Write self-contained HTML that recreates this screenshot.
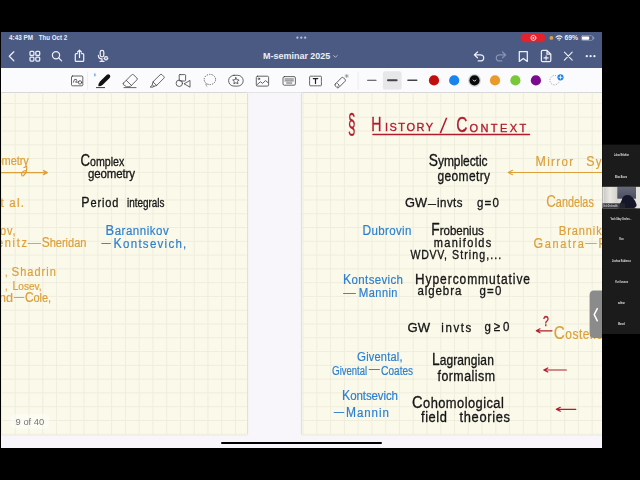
<!DOCTYPE html>
<html lang="en">
<head>
<meta charset="utf-8">
<title>M-seminar 2025</title>
<style>
*{box-sizing:border-box;margin:0;padding:0}
html,body{width:640px;height:480px;overflow:hidden;background:#000}
body{position:relative;font-family:"Liberation Sans",sans-serif;color:#000}
.abs{position:absolute}
#screen{position:absolute;left:1px;top:32px;width:601px;height:416px;background:#f8f6fa;overflow:hidden}
#nav{position:absolute;left:0;top:0;width:601px;height:36px;background:#4b5a82;color:#fff}
#tools{position:absolute;left:0;top:36px;width:601px;height:24.5px;background:#fbfbfd;border-bottom:1px solid #e4e3e6}
.page{position:absolute;top:60.5px;height:342.5px;background-color:#faf9ea;
 background-image:linear-gradient(to right,#efeddd 0,#efeddd 1px,transparent 1px),linear-gradient(to bottom,#efeddd 0,#efeddd 1px,transparent 1px);
 background-size:13.77px 13.79px;box-shadow:0 0.3px 1.6px rgba(0,0,0,.38);overflow:hidden}
#pl{left:-1px;width:246.5px;background-position:1px 10px}
#pr{left:300.5px;width:301px;background-position:0.6px 10px}
#home{position:absolute;left:220px;top:410.2px;width:160.5px;height:2.3px;border-radius:1.2px;background:#000}
#hw{filter:blur(0.3px)}
</style>
</head>
<body>
<div id="screen">
  <div id="nav"></div>
  <div id="tools"></div>
  <div class="page" id="pl"></div>
  <div class="page" id="pr"></div>
  <div id="home"></div>
</div>

<svg id="ui" class="abs" style="left:0;top:0" width="640" height="480" viewBox="0 0 640 480" fill="none" stroke-linecap="round" stroke-linejoin="round">
<!--HW-->
<g id="hw" font-family="'Liberation Sans',sans-serif" stroke-linecap="round" stroke-linejoin="round" fill="none">
 <path d="M0 172.6 H47 M43.5 170.6 L47.3 172.6 L43.5 174.6" stroke="#dca03a" stroke-width="1.2"/>
 <path d="M26.5 166 Q27.5 171 24.5 174.5 Q22 177.5 21.5 174.5 Q21.5 171.5 25.5 170.5" stroke="#dca03a" stroke-width="1.2"/>
 <path d="M373 134.6 H529.5" stroke="#b01c2b" stroke-width="1.5"/>
 <path d="M508.5 172.5 H602 M512.5 170.3 L508.3 172.5 L512.5 174.7" stroke="#dca03a" stroke-width="1.2"/>
 <path d="M536.5 330.8 H552 M540 328.8 L536.3 330.8 L540 332.8" stroke="#b01c2b" stroke-width="1.2"/>
 <path d="M544 370 H566.3 M547.8 368 L543.8 370 L547.8 372" stroke="#b01c2b" stroke-width="1.2"/>
 <path d="M556.5 409.3 H575.8 M560.3 407.3 L556.3 409.3 L560.3 411.3" stroke="#b01c2b" stroke-width="1.2"/>
 <text x="28" y="246.5" font-size="12.5" textLength="12.8" lengthAdjust="spacingAndGlyphs" fill="#dca03a" stroke="#dca03a" stroke-width="0.3">–</text>
 <text x="101.8" y="246.8" font-size="12.5" textLength="8.7" lengthAdjust="spacingAndGlyphs" fill="#2e80ce" stroke="#2e80ce" stroke-width="0.3">–</text>
 <text x="14" y="301.2" font-size="12.5" textLength="10" lengthAdjust="spacingAndGlyphs" fill="#dca03a" stroke="#dca03a" stroke-width="0.3">–</text>
 <text x="428" y="207.5" font-size="12.5" textLength="8" lengthAdjust="spacingAndGlyphs" fill="#151515" stroke="#151515" stroke-width="0.3">–</text>
 <text x="585.5" y="246.9" font-size="12.5" textLength="11.0" lengthAdjust="spacingAndGlyphs" fill="#dca03a" stroke="#dca03a" stroke-width="0.3">–</text>
 <text x="343.5" y="296.8" font-size="12.5" textLength="12.0" lengthAdjust="spacingAndGlyphs" fill="#2e80ce" stroke="#2e80ce" stroke-width="0.3">–</text>
 <text x="369" y="373.4" font-size="12.5" textLength="10.5" lengthAdjust="spacingAndGlyphs" fill="#2e80ce" stroke="#2e80ce" stroke-width="0.3">–</text>
 <text x="334" y="415.8" font-size="12.5" textLength="10" lengthAdjust="spacingAndGlyphs" fill="#2e80ce" stroke="#2e80ce" stroke-width="0.3">–</text>
 <text transform="matrix(1 0 0 1.15 0 -24.79)" x="-4.5" y="165.3" font-size="11.0" textLength="33.3" lengthAdjust="spacing" fill="#dca03a" stroke="#dca03a" stroke-width="0.18">ometry</text>
 <text transform="matrix(1 0 0 1.15 0 -24.94)" x="80.5" y="166.3" font-size="11.5" textLength="43.8" lengthAdjust="spacingAndGlyphs" fill="#151515" stroke="#151515" stroke-width="0.28"><tspan font-size="14.3">C</tspan>omplex</text>
 <text transform="matrix(1 0 0 1.15 0 -26.67)" x="88" y="177.8" font-size="11.5" textLength="47" lengthAdjust="spacing" fill="#151515" stroke="#151515" stroke-width="0.28">geometry</text>
 <text transform="matrix(1 0 0 1.15 0 -31.12)" x="0.5" y="207.5" font-size="11.5" textLength="23.5" lengthAdjust="spacing" fill="#dca03a" stroke="#dca03a" stroke-width="0.18">t al.</text>
 <text transform="matrix(1 0 0 1.15 0 -30.99)" x="81.3" y="206.6" font-size="11.0" textLength="37.2" lengthAdjust="spacing" fill="#151515" stroke="#151515" stroke-width="0.28"><tspan font-size="12.4">P</tspan>eriod</text>
 <text transform="matrix(1 0 0 1.15 0 -30.99)" x="127" y="206.6" font-size="11.0" textLength="37.5" lengthAdjust="spacingAndGlyphs" fill="#151515" stroke="#151515" stroke-width="0.28">integrals</text>
 <text transform="matrix(1 0 0 1.15 0 -35.25)" x="0" y="235" font-size="11.0" textLength="15.6" lengthAdjust="spacing" fill="#dca03a" stroke="#dca03a" stroke-width="0.18">ov,</text>
 <text transform="matrix(1 0 0 1.15 0 -37.05)" x="-3" y="247" font-size="11.0" textLength="30" lengthAdjust="spacing" fill="#dca03a" stroke="#dca03a" stroke-width="0.18">enitz</text>
 <text transform="matrix(1 0 0 1.15 0 -37.05)" x="41.7" y="247" font-size="11.5" textLength="44.8" lengthAdjust="spacingAndGlyphs" fill="#dca03a" stroke="#dca03a" stroke-width="0.18"><tspan font-size="12.4">S</tspan>heridan</text>
 <text transform="matrix(1 0 0 1.15 0 -35.32)" x="105.5" y="235.5" font-size="11.5" textLength="63.3" lengthAdjust="spacing" fill="#2e80ce" stroke="#2e80ce" stroke-width="0.18"><tspan font-size="12.9">B</tspan>arannikov</text>
 <text transform="matrix(1 0 0 1.15 0 -37.2)" x="113.5" y="248" font-size="11.5" textLength="72.8" lengthAdjust="spacing" fill="#2e80ce" stroke="#2e80ce" stroke-width="0.18"><tspan font-size="12.4">K</tspan>ontsevich,</text>
 <text transform="matrix(1 0 0 1.15 0 -41.34)" x="5" y="275.6" font-size="10.1" textLength="2.5" lengthAdjust="spacingAndGlyphs" fill="#dca03a" stroke="#dca03a" stroke-width="0.18">,</text>
 <text transform="matrix(1 0 0 1.15 0 -41.34)" x="11.5" y="275.6" font-size="11.0" textLength="44.3" lengthAdjust="spacing" fill="#dca03a" stroke="#dca03a" stroke-width="0.18"><tspan font-size="11.5">S</tspan>hadrin</text>
 <text transform="matrix(1 0 0 1.15 0 -43.57)" x="5" y="290.5" font-size="10.1" textLength="2.5" lengthAdjust="spacingAndGlyphs" fill="#dca03a" stroke="#dca03a" stroke-width="0.18">,</text>
 <text transform="matrix(1 0 0 1.15 0 -43.5)" x="12.5" y="290" font-size="10.1" textLength="29.2" lengthAdjust="spacing" fill="#dca03a" stroke="#dca03a" stroke-width="0.18"><tspan font-size="10.6">L</tspan>osev,</text>
 <text transform="matrix(1 0 0 1.15 0 -45.25)" x="-1" y="301.7" font-size="11.0" textLength="14" lengthAdjust="spacingAndGlyphs" fill="#dca03a" stroke="#dca03a" stroke-width="0.18">nd</text>
 <text transform="matrix(1 0 0 1.15 0 -45.25)" x="25" y="301.7" font-size="11.0" textLength="26" lengthAdjust="spacing" fill="#dca03a" stroke="#dca03a" stroke-width="0.18"><tspan font-size="12.0">C</tspan>ole,</text>
 <text x="348" y="132.6" font-size="27.6" textLength="7.5" lengthAdjust="spacingAndGlyphs" fill="#b01c2b" stroke="#b01c2b" stroke-width="0.35">§</text>
 <text x="371.3" y="130.8" font-size="20.5" textLength="10.2" lengthAdjust="spacingAndGlyphs" fill="#b01c2b" stroke="#b01c2b" stroke-width="0.35">H</text>
 <text x="385" y="130.8" font-size="11.0" textLength="48" lengthAdjust="spacing" fill="#b01c2b" stroke="#b01c2b" stroke-width="0.35">ISTORY</text>
 <text x="456.3" y="132" font-size="22.1" textLength="11.2" lengthAdjust="spacingAndGlyphs" fill="#b01c2b" stroke="#b01c2b" stroke-width="0.35">C</text>
 <text x="469.5" y="131.6" font-size="11.0" textLength="56.8" lengthAdjust="spacing" fill="#b01c2b" stroke="#b01c2b" stroke-width="0.35">ONTEXT</text>
 <text transform="matrix(1 0 0 1.15 0 -24.82)" x="428.8" y="165.5" font-size="12.0" textLength="58.7" lengthAdjust="spacing" fill="#151515" stroke="#151515" stroke-width="0.28"><tspan font-size="13.8">S</tspan>ymplectic</text>
 <text transform="matrix(1 0 0 1.15 0 -27.19)" x="437.5" y="181.3" font-size="12.0" textLength="52.5" lengthAdjust="spacing" fill="#151515" stroke="#151515" stroke-width="0.28">geometry</text>
 <text transform="matrix(1 0 0 1.15 0 -24.82)" x="535.5" y="165.5" font-size="11.5" textLength="37.5" lengthAdjust="spacing" fill="#dca03a" stroke="#dca03a" stroke-width="0.18"><tspan font-size="12.4">M</tspan>irror</text>
 <text transform="matrix(1 0 0 1.15 0 -24.82)" x="586.3" y="165.5" font-size="11.5" textLength="25.7" lengthAdjust="spacing" fill="#dca03a" stroke="#dca03a" stroke-width="0.18"><tspan font-size="12.4">S</tspan>ym</text>
 <text transform="matrix(1 0 0 1.15 0 -31.12)" x="405" y="207.5" font-size="11.5" textLength="22" lengthAdjust="spacingAndGlyphs" fill="#151515" stroke="#151515" stroke-width="0.28">GW</text>
 <text transform="matrix(1 0 0 1.15 0 -31.12)" x="437" y="207.5" font-size="11.5" textLength="25.5" lengthAdjust="spacing" fill="#151515" stroke="#151515" stroke-width="0.28">invts</text>
 <text transform="matrix(1 0 0 1.15 0 -31.02)" x="477" y="206.8" font-size="11.5" textLength="21.8" lengthAdjust="spacing" fill="#151515" stroke="#151515" stroke-width="0.28">g=0</text>
 <text transform="matrix(1 0 0 1.15 0 -31.12)" x="546.3" y="207.5" font-size="12.0" textLength="47.5" lengthAdjust="spacingAndGlyphs" fill="#dca03a" stroke="#dca03a" stroke-width="0.18"><tspan font-size="14.7">C</tspan>andelas</text>
 <text transform="matrix(1 0 0 1.15 0 -35.32)" x="362.5" y="235.5" font-size="11.5" textLength="48.8" lengthAdjust="spacing" fill="#2e80ce" stroke="#2e80ce" stroke-width="0.18"><tspan font-size="12.0">D</tspan>ubrovin</text>
 <text transform="matrix(1 0 0 1.15 0 -35.25)" x="431.3" y="235" font-size="11.5" textLength="52.5" lengthAdjust="spacing" fill="#151515" stroke="#151515" stroke-width="0.28"><tspan font-size="13.8">F</tspan>robenius</text>
 <text transform="matrix(1 0 0 1.15 0 -37.05)" x="433.8" y="247" font-size="11.0" textLength="57.5" lengthAdjust="spacing" fill="#151515" stroke="#151515" stroke-width="0.28">manifolds</text>
 <text transform="matrix(1 0 0 1.15 0 -38.82)" x="410.5" y="258.8" font-size="10.6" textLength="36.5" lengthAdjust="spacing" fill="#151515" stroke="#151515" stroke-width="0.28">WDVV,</text>
 <text transform="matrix(1 0 0 1.15 0 -38.82)" x="452" y="258.8" font-size="10.6" textLength="49.3" lengthAdjust="spacing" fill="#151515" stroke="#151515" stroke-width="0.28">String,...</text>
 <text transform="matrix(1 0 0 1.15 0 -35.25)" x="558.8" y="235" font-size="11.0" textLength="56.2" lengthAdjust="spacing" fill="#dca03a" stroke="#dca03a" stroke-width="0.18"><tspan font-size="11.5">B</tspan>rannikov</text>
 <text transform="matrix(1 0 0 1.15 0 -37.2)" x="533.5" y="248" font-size="11.0" textLength="50.5" lengthAdjust="spacing" fill="#dca03a" stroke="#dca03a" stroke-width="0.18"><tspan font-size="12.4">G</tspan>anatra</text>
 <text transform="matrix(1 0 0 1.15 0 -37.2)" x="598.5" y="248" font-size="12.0" textLength="7.5" lengthAdjust="spacingAndGlyphs" fill="#dca03a" stroke="#dca03a" stroke-width="0.18">P</text>
 <text transform="matrix(1 0 0 1.15 0 -42.57)" x="343" y="283.8" font-size="11.5" textLength="60" lengthAdjust="spacing" fill="#2e80ce" stroke="#2e80ce" stroke-width="0.18"><tspan font-size="12.4">K</tspan>ontsevich</text>
 <text transform="matrix(1 0 0 1.15 0 -44.62)" x="358.8" y="297.5" font-size="11.0" textLength="38.7" lengthAdjust="spacing" fill="#2e80ce" stroke="#2e80ce" stroke-width="0.18"><tspan font-size="11.5">M</tspan>annin</text>
 <text transform="matrix(1 0 0 1.15 0 -42.57)" x="415" y="283.8" font-size="12.0" textLength="115" lengthAdjust="spacing" fill="#151515" stroke="#151515" stroke-width="0.28"><tspan font-size="13.3">H</tspan>ypercommutative</text>
 <text transform="matrix(1 0 0 1.15 0 -44.32)" x="417.5" y="295.5" font-size="11.5" textLength="43.8" lengthAdjust="spacing" fill="#151515" stroke="#151515" stroke-width="0.28">algebra</text>
 <text transform="matrix(1 0 0 1.15 0 -44.25)" x="479.5" y="295" font-size="11.5" textLength="21.8" lengthAdjust="spacing" fill="#151515" stroke="#151515" stroke-width="0.28">g=0</text>
 <text transform="matrix(1 0 0 1.15 0 -49.8)" x="407.5" y="332" font-size="11.5" textLength="22.5" lengthAdjust="spacingAndGlyphs" fill="#151515" stroke="#151515" stroke-width="0.28">GW</text>
 <text transform="matrix(1 0 0 1.15 0 -49.8)" x="441.3" y="332" font-size="11.5" textLength="30.0" lengthAdjust="spacing" fill="#151515" stroke="#151515" stroke-width="0.28">invts</text>
 <text transform="matrix(1 0 0 1.15 0 -49.72)" x="484.5" y="331.5" font-size="11.5" textLength="25.0" lengthAdjust="spacing" fill="#151515" stroke="#151515" stroke-width="0.28">g≥0</text>
 <text x="543" y="325.5" font-size="14.3" textLength="5.8" lengthAdjust="spacingAndGlyphs" fill="#b01c2b" stroke="#b01c2b" stroke-width="0.35">?</text>
 <text transform="matrix(1 0 0 1.15 0 -50.82)" x="553.8" y="338.8" font-size="12.0" textLength="49.2" lengthAdjust="spacing" fill="#dca03a" stroke="#dca03a" stroke-width="0.18"><tspan font-size="15.2">C</tspan>ostello</text>
 <text transform="matrix(1 0 0 1.15 0 -54.19)" x="357" y="361.3" font-size="11.0" textLength="45.5" lengthAdjust="spacing" fill="#2e80ce" stroke="#2e80ce" stroke-width="0.18"><tspan font-size="11.5">G</tspan>ivental,</text>
 <text transform="matrix(1 0 0 1.15 0 -56.17)" x="332" y="374.5" font-size="11.0" textLength="35" lengthAdjust="spacingAndGlyphs" fill="#2e80ce" stroke="#2e80ce" stroke-width="0.18"><tspan font-size="11.5">G</tspan>ivental</text>
 <text transform="matrix(1 0 0 1.15 0 -56.17)" x="381" y="374.5" font-size="11.0" textLength="32" lengthAdjust="spacingAndGlyphs" fill="#2e80ce" stroke="#2e80ce" stroke-width="0.18"><tspan font-size="11.5">C</tspan>oates</text>
 <text transform="matrix(1 0 0 1.15 0 -54.82)" x="432" y="365.5" font-size="12.0" textLength="61.8" lengthAdjust="spacing" fill="#151515" stroke="#151515" stroke-width="0.28"><tspan font-size="13.8">L</tspan>agrangian</text>
 <text transform="matrix(1 0 0 1.15 0 -57.15)" x="437.5" y="381" font-size="12.4" textLength="57.5" lengthAdjust="spacing" fill="#151515" stroke="#151515" stroke-width="0.28">formalism</text>
 <text transform="matrix(1 0 0 1.15 0 -60.0)" x="342" y="400" font-size="11.5" textLength="56" lengthAdjust="spacing" fill="#2e80ce" stroke="#2e80ce" stroke-width="0.18"><tspan font-size="12.4">K</tspan>ontsevich</text>
 <text transform="matrix(1 0 0 1.15 0 -62.55)" x="346" y="417" font-size="11.5" textLength="42.8" lengthAdjust="spacing" fill="#2e80ce" stroke="#2e80ce" stroke-width="0.18"><tspan font-size="12.0">M</tspan>annin</text>
 <text transform="matrix(1 0 0 1.15 0 -61.2)" x="412" y="408" font-size="12.9" textLength="91.8" lengthAdjust="spacing" fill="#151515" stroke="#151515" stroke-width="0.28"><tspan font-size="14.7">C</tspan>ohomological</text>
 <text transform="matrix(1 0 0 1.15 0 -63.37)" x="421" y="422.5" font-size="12.9" textLength="26" lengthAdjust="spacing" fill="#151515" stroke="#151515" stroke-width="0.28">field</text>
 <text transform="matrix(1 0 0 1.15 0 -63.37)" x="459.5" y="422.5" font-size="12.9" textLength="50.5" lengthAdjust="spacing" fill="#151515" stroke="#151515" stroke-width="0.28">theories</text>
 <text x="439.6" y="132.6" font-size="21" fill="#b01c2b" transform="translate(439.6 132.6) skewX(-8) translate(-439.6 -132.6)">/</text>
</g>
<!--/HW-->
 <!-- status bar -->
 <g fill="#b9c0d6" stroke="none"><circle cx="297.4" cy="37.7" r="1.15"/><circle cx="301.3" cy="37.7" r="1.15"/><circle cx="305.2" cy="37.7" r="1.15"/></g>
 <rect x="520.6" y="33.6" width="24.8" height="8.6" rx="4.3" fill="#e4222d"/>
 <circle cx="533.4" cy="37.9" r="2.5" stroke="#fff" stroke-width="0.8"/><circle cx="533.4" cy="37.9" r="0.9" fill="#fff"/>
 <circle cx="551.4" cy="37.9" r="1.9" fill="#e0a04a"/>
 <g stroke="#f0f2f8" stroke-width="1.1"><path d="M556.1 37.2 Q559.1 34.6 562.1 37.2"/><path d="M557.5 38.7 Q559.1 37.4 560.7 38.7"/></g><circle cx="559.1" cy="40" r="0.7" fill="#f0f2f8"/>
 <rect x="581.3" y="35.7" width="11.4" height="4.7" rx="1.3" stroke="#aab2cc" stroke-width="0.6"/><rect x="582" y="36.4" width="7.2" height="3.3" rx="0.8" fill="#fff"/><path d="M593.7 37.2v1.8" stroke="#aab2cc" stroke-width="0.8"/>
 <g font-family="'Liberation Sans',sans-serif" font-weight="bold" fill="#eceef5" stroke="none">
  <text x="9" y="40.1" font-size="6.5" textLength="24" lengthAdjust="spacingAndGlyphs">4:43 PM</text>
  <text x="38.8" y="40.1" font-size="6.5" textLength="28.4" lengthAdjust="spacingAndGlyphs">Thu Oct 2</text>
  <text x="564.4" y="40.1" font-size="6.5" textLength="13.7" lengthAdjust="spacingAndGlyphs">69%</text>
  <text x="263.1" y="59.3" font-size="9" textLength="67.2" lengthAdjust="spacingAndGlyphs">M-seminar 2025</text>
 </g>
 <!-- toolbar -->
 <rect x="382.9" y="71.3" width="18.7" height="18.3" rx="2.2" fill="#e7e7ea"/>
 <g stroke="#444" stroke-width="1.1"><path d="M367.6 80.3 H376"/><path d="M388 80.3 H396.6" stroke-width="2.1"/><path d="M407.9 80.3 H416.8" stroke-width="1.4"/></g>
 <g stroke="#e2e2e6" stroke-width="0.6"><path d="M87.6 72 V89"/><path d="M358.1 72 V89"/></g>
 <circle cx="434" cy="80.4" r="5.1" fill="#c00d0d"/>
 <circle cx="454.2" cy="80.4" r="5.1" fill="#1a84ee"/>
 <circle cx="474.5" cy="80.4" r="6.4" fill="#d4d4d8"/><circle cx="474.5" cy="80.4" r="5.1" fill="#0a0a0a"/><path d="M473.2 80 L474.5 81.3 L475.8 80" stroke="#fff" stroke-width="0.9"/>
 <circle cx="495" cy="80.4" r="5.1" fill="#ea9a2b"/>
 <circle cx="515.4" cy="80.4" r="5.1" fill="#79c83a"/>
 <circle cx="535.9" cy="80.4" r="5.1" fill="#7b0b8e"/>
 <circle cx="554.6" cy="80.2" r="4.7" stroke="#8a8a90" stroke-width="0.9" stroke-dasharray="1 1.45" stroke-linecap="butt"/>
 <circle cx="560.5" cy="77.3" r="3.7" fill="#fbfbfd"/><circle cx="560.5" cy="77.3" r="3.1" fill="#1a84ee"/><path d="M558.9 77.3 h3.2 M560.5 75.7 v3.2" stroke="#fff" stroke-width="0.8"/>
 <g stroke="#3f3f42" stroke-width="0.8">
  <!-- photo lasso -->
  <rect x="71.5" y="76" width="11.3" height="9.8" rx="1"/><path d="M73.3 82.3 Q74 78.3 76.3 79.3 Q77.6 80.2 75.6 82.2 Q77.6 82.6 79 81.6"/><circle cx="80" cy="82.4" r="1.7"/>
  <!-- eraser -->
  <path d="M123.4 83.2 L131.6 74.9 Q132.6 74 133.6 74.9 L136.9 78 Q137.8 79 136.9 79.9 L130 86.8 H126.6 L123.4 84.6 Q122.7 83.9 123.4 83.2 Z M126.3 80.4 L131.4 85.4 M124 87.6 H136"/>
  <!-- highlighter -->
  <path d="M153.2 81.6 L160.2 74.7 Q161.1 73.9 162 74.7 L163.9 76.6 Q164.6 77.4 163.9 78.2 L156.9 85.2 Z M153.2 81.6 L152.2 84.6 L154 86.4 L156.9 85.2 M152.4 85 L150.2 87.1 H153.2 L153.9 86.3"/>
  <!-- shapes -->
  <rect x="179.2" y="74.6" width="6.4" height="6.4" rx="0.8"/><circle cx="179.3" cy="83.3" r="3.2"/><path d="M190 80.8 V87.2 L184.4 84 Z"/>
  <!-- lasso -->
  <ellipse cx="209.9" cy="79.5" rx="5.7" ry="5.1" stroke-dasharray="1.3 1.1" stroke-linecap="butt"/><path d="M206.2 83.6 Q205.4 85.8 208 87" stroke-dasharray="1.2 0.9" stroke-linecap="butt"/>
  <!-- sticker -->
  <rect x="228.6" y="75.3" width="14.6" height="10.8" rx="5.4"/><path d="M235.9 77.6 L236.9 79.7 L239.1 80 L237.5 81.6 L237.9 83.8 L235.9 82.7 L233.9 83.8 L234.3 81.6 L232.7 80 L234.9 79.7 Z" stroke-width="0.8"/>
  <!-- image -->
  <rect x="256.3" y="76.2" width="12.3" height="9.9" rx="1.2"/><circle cx="258.9" cy="78.8" r="0.8"/><path d="M257.2 84.6 L260.4 81.7 L262.6 83.4 L265.4 80.6 L268 82.6"/>
  <!-- keyboard -->
  <rect x="283" y="76.6" width="12.4" height="8.6" rx="1.4"/><path d="M285 79 h8.4 M285 80.9 h8.4 M286.6 83 h5.2" stroke-width="0.8" stroke-dasharray="0.9 0.7"/>
  <!-- text box -->
  <rect x="309.6" y="76.2" width="11.8" height="9.6" rx="0.6" stroke-dasharray="3.2 0.9"/><path d="M313.3 78.6 h4.4 M315.5 78.6 v4.8" stroke-width="1.2" stroke="#222"/>
  <!-- laser pointer -->
  <path d="M335.3 84 L341.5 77.8 Q342.5 76.9 343.5 77.8 L345 79.3 Q345.9 80.3 345 81.3 L338.8 87.5 Q337.8 88.3 336.9 87.5 L335.3 85.9 Q334.5 85 335.3 84 Z M337.6 83.6 L339.2 85.2 L337.9 86.5" stroke-width="0.85"/>
  <path d="M346.7 74.3 v3.4 M345 76 h3.4 M345.5 74.8 l2.4 2.4 M347.9 74.8 l-2.4 2.4" stroke-width="0.5" stroke="#777"/>
 </g>
 <!-- pen -->
 <path d="M98.4 86.3 Q98.2 83.6 100 81.6 L106.6 75 Q108.3 73.6 109.8 75 Q111 76.4 109.6 78 L103 84.4 Q101 86.2 98.4 86.3 Z" fill="#111" stroke="none"/>
 <path d="M96.4 87.6 H104.6" stroke="#222" stroke-width="0.9"/>
 <path d="M94 73.6 l1.4 1.3 l-0.8 0.8 v-2.9 l0.8 0.8 l-1.4 1.3" stroke="#2a8bea" stroke-width="0.45" transform="translate(0.2,0.6)"/>
 <!-- nav icons -->
 <g stroke="#eef0f6" stroke-width="1.25">
  <path d="M13.8 51.8 L9.3 56.3 L13.8 60.8"/>
  <rect x="30" y="51.4" width="3.9" height="4" rx="0.9"/><rect x="35.8" y="51.4" width="3.9" height="4" rx="0.9"/><rect x="30" y="57" width="3.9" height="4" rx="0.9"/><rect x="35.8" y="57" width="3.9" height="4" rx="0.9"/>
  <circle cx="56" cy="55.2" r="3.6"/><path d="M58.7 57.9 L61.6 60.9"/>
  <path d="M77.4 53.6 H76.2 Q75.3 53.6 75.3 54.5 V60.4 Q75.3 61.3 76.2 61.3 H82.8 Q83.7 61.3 83.7 60.4 V54.5 Q83.7 53.6 82.8 53.6 H81.6"/><path d="M79.5 57.6 V50.2 M77.6 52 L79.5 50.1 L81.4 52"/>
  <rect x="100.2" y="50.3" width="3.6" height="6.6" rx="1.8"/><path d="M98.4 55.4 Q98.4 58.8 102 58.8 M102 58.8 V61.2 M100 61.3 H104"/>
  <path d="M477.5 52 L474.3 54.9 L477.5 57.8 M474.6 54.9 H480.2 Q483.7 54.9 483.7 57.9 Q483.7 60.9 480.2 60.9 H478.2"/>
  <path d="M519.3 51.5 H527.3 V61.4 L523.3 58.4 L519.3 61.4 Z"/>
  <path d="M547 50.4 H542.6 Q541.4 50.4 541.4 51.6 V60.4 Q541.4 61.6 542.6 61.6 H549.6 Q550.8 61.6 550.8 60.4 V54.2 Z M547 50.4 V54.2 H550.8"/><path d="M546.1 55.8 V60 M544 57.9 H548.2" stroke-width="1.1"/>
  <path d="M564.4 52.2 L572.2 60.2 M572.2 52.2 L564.4 60.2" stroke-width="1.1"/>
 </g>
 <path d="M502.5 52 L505.7 54.9 L502.5 57.8 M505.4 54.9 H499.8 Q496.3 54.9 496.3 57.9 Q496.3 60.9 499.8 60.9 H501.8" stroke="#8892b2" stroke-width="1.25"/>
 <circle cx="106" cy="58.3" r="2.3" fill="#eef0f6"/><path d="M105.1 57.4 l1.8 1.8 m0 -1.8 l-1.8 1.8" stroke="#4b5a82" stroke-width="0.7"/>
 <path d="M333.7 55.6 L335.4 57.3 L337.1 55.6" stroke="#b9c0d6" stroke-width="1"/>
 <g fill="#eef0f6"><circle cx="586.8" cy="56.2" r="1.15"/><circle cx="590.6" cy="56.2" r="1.15"/><circle cx="594.4" cy="56.2" r="1.15"/></g>
<!--PANEL-->
 <rect x="0" y="0" width="1" height="480" fill="#000"/>
 <rect x="602" y="0" width="38" height="480" fill="#000"/>
 <rect x="0" y="0" width="640" height="32" fill="#000"/>
 <rect x="0" y="448" width="640" height="32" fill="#000"/>
 <path d="M602 290.5 H594 Q589.6 290.5 589.6 295 V333.5 Q589.6 338 594 338 H602 Z" fill="#8b8b8b"/>
 <path d="M597.3 308.6 L594.2 314.7 L597.3 320.8" stroke="#fff" stroke-width="1.5" fill="none" stroke-linecap="round" stroke-linejoin="round"/>
 <rect x="602.2" y="144.6" width="37.8" height="189.4" fill="#1b1b1b"/>
 <g id="vid">
  <defs>
   <linearGradient id="cur" x1="0" x2="1" y1="0" y2="0"><stop offset="0" stop-color="#f4f3ef"/><stop offset="0.12" stop-color="#cfcdc8"/><stop offset="0.5" stop-color="#e9e7e2"/><stop offset="1" stop-color="#d2d0cb"/></linearGradient>
   <linearGradient id="win" x1="0" x2="0" y1="0" y2="1"><stop offset="0" stop-color="#666978"/><stop offset="1" stop-color="#4a4e60"/></linearGradient>
  </defs>
  <rect x="602.5" y="186.9" width="37.5" height="21.3" fill="#dcdad6"/>
  <rect x="602.5" y="186.9" width="15" height="21.3" fill="url(#cur)"/>
  <rect x="617.3" y="186.9" width="18.7" height="11.8" fill="url(#win)"/>
  <rect x="636" y="186.9" width="4" height="21.3" fill="#e6e4e0"/>
  <path d="M619.5 208.2 Q619.6 203 621.8 200 Q622.6 196 626 195.2 Q630 194.6 632.6 197.4 Q635.4 200.4 636.6 204.6 Q637 206.6 635 207.4 L634 208.2 Z" fill="#15162a"/>
  <rect x="602.5" y="203.3" width="22.5" height="4.9" fill="#26262c" opacity="0.9"/>
 </g>
 <g font-family="'Liberation Sans',sans-serif" font-size="2.7" fill="#e2e2e2" font-weight="bold" lengthAdjust="spacingAndGlyphs">
  <text x="614" y="156.4" textLength="15" lengthAdjust="spacingAndGlyphs">Lukas Melchior</text>
  <text x="615" y="177.6" textLength="12" lengthAdjust="spacingAndGlyphs">Elias Barza</text>
  <text x="603.2" y="206.7" textLength="14.5" lengthAdjust="spacingAndGlyphs" fill="#d8d8dc">Yash Deshmukh</text>
  <text x="610.4" y="219.7" textLength="21" lengthAdjust="spacingAndGlyphs">Yash Uday Deshm...</text>
  <text x="619" y="240.2" textLength="4.6" lengthAdjust="spacingAndGlyphs">Yao</text>
  <text x="612" y="261.7" textLength="19" lengthAdjust="spacingAndGlyphs">Joshua Kubinecz</text>
  <text x="615" y="282.9" textLength="13" lengthAdjust="spacingAndGlyphs">Yuri Ivanov</text>
  <text x="618" y="304" textLength="7" lengthAdjust="spacingAndGlyphs">adrian</text>
  <text x="618" y="325.1" textLength="7" lengthAdjust="spacingAndGlyphs">Marcel</text>
 </g>
<!--/PANEL-->
<rect x="10.5" y="414.3" width="38.5" height="14.6" rx="4.5" fill="#fff" opacity="0.45"/>
<text x="15.6" y="425" font-family="'Liberation Sans',sans-serif" font-size="9.3" fill="#747474" textLength="28.6" lengthAdjust="spacingAndGlyphs">9 of 40</text>
</svg>
</body>
</html>
